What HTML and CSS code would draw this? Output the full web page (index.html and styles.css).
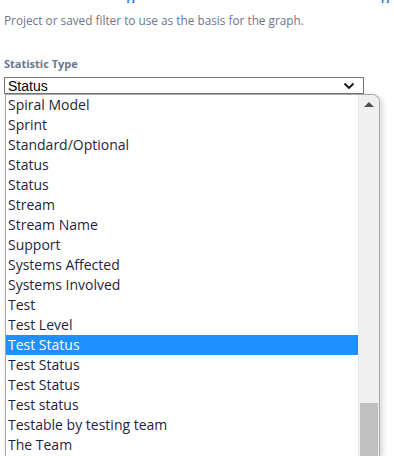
FILE: index.html
```html
<!DOCTYPE html>
<html lang="en">
<head>
    <meta charset="UTF-8">
    <title>Statistic Type</title>
    <link rel="stylesheet" href="styles.css">
</head>
<body>
    <div class="form">
        <div class="top-link"><a href="#">Advanced searching and saved filters · Learn about filtering by query</a></div>
        <div class="description">Project or saved filter to use as the basis for the graph.</div>

        <label class="field-label">Statistic Type</label>
        <div class="select-box">
            <span>Status</span>
            <svg class="chevron" width="12" height="8" viewBox="0 0 12 8">
                <path d="M1.5 1.5 L6 6 L10.5 1.5" fill="none" stroke="#111" stroke-width="1.8"/>
            </svg>
        </div>

        <div class="listbox">
            <ul class="options">
                <li>Spiral Model</li>
                <li>Sprint</li>
                <li>Standard/Optional</li>
                <li>Status</li>
                <li>Status</li>
                <li>Stream</li>
                <li>Stream Name</li>
                <li>Support</li>
                <li>Systems Affected</li>
                <li>Systems Involved</li>
                <li>Test</li>
                <li>Test Level</li>
                <li class="selected">Test Status</li>
                <li>Test Status</li>
                <li>Test Status</li>
                <li>Test status</li>
                <li>Testable by testing team</li>
                <li>The Team</li>
            </ul>
            <div class="scrollbar">
                <div class="arrow-up"></div>
                <div class="track"></div>
                <div class="thumb"></div>
            </div>
        </div>
    </div>
</body>
</html>
```

FILE: styles.css
```css
body {
    margin: 0;
    background-color: #fff;
    font-family: "Open Sans", "Noto Sans", sans-serif;
    overflow: hidden;
    height: 456px;
}
.form {
    padding-left: 4px;
}
.top-link {
    font-size: 14px;
    line-height: 16px;
    margin-top: -13px;
    height: 16px;
    white-space: nowrap;
    overflow: hidden;
    text-align: right;
    padding-right: 2px;
}
.top-link a {
    color: #0052cc;
    text-decoration: none;
}
.description {
    margin-top: 10px;
    font-size: 11.8px;
    line-height: 14px;
    color: #6b778c;
}
.field-label {
    display: block;
    margin-top: 30px;
    font-size: 11px;
    line-height: 14px;
    font-weight: bold;
    color: #6b778c;
}
.select-box {
    margin-top: 6px;
    height: 15px;
    border: 1px solid #767676;
    display: flex;
    align-items: center;
    justify-content: space-between;
    padding: 0 0 0 3px;
    width: 355px;
    font-family: "Liberation Sans", Arial, sans-serif;
    font-size: 14px;
    color: #000;
}
.chevron {
    margin-right: 8px;
}
.listbox {
    margin-left: 1px;
    width: 373px;
    height: 361px;
    border: 1px solid #a8a8a8;
    border-bottom: none;
    border-top-right-radius: 8px;
    box-shadow: 2px 2px 6px rgba(0, 0, 0, 0.18);
    display: flex;
    overflow: hidden;
    background-color: #fff;
}
.options {
    list-style: none;
    margin: 0;
    padding: 0;
    flex: 1;
    font-size: 14px;
    color: #1f1f3a;
}
.options li {
    height: 20px;
    line-height: 20px;
    padding-left: 2px;
    white-space: nowrap;
}
.options li.selected {
    background-color: #1e90ff;
    color: #fff;
}
.scrollbar {
    width: 20px;
    background-color: #f0f0f0;
    display: flex;
    flex-direction: column;
    align-items: center;
    border-left: 1px solid #e8e8e8;
}
.arrow-up {
    margin-top: 7px;
    width: 0;
    height: 0;
    border-left: 5px solid transparent;
    border-right: 5px solid transparent;
    border-bottom: 5px solid #505050;
}
.track {
    height: 296px;
}
.thumb {
    width: 18px;
    flex: 1;
    background-color: #c1c1c1;
}
```
